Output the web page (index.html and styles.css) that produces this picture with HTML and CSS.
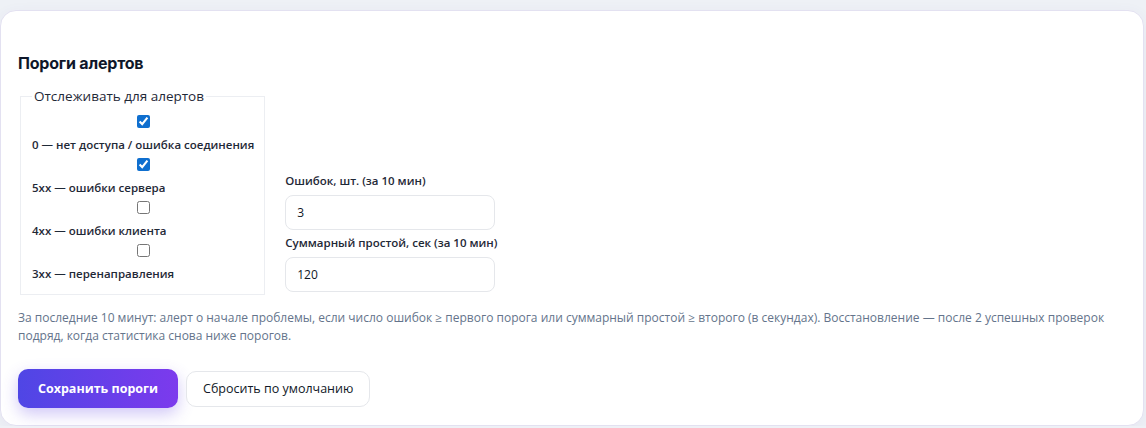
FILE: index.html
```html
<!DOCTYPE html>
<html>
<head>
  <meta charset="UTF-8">
  <title>Пороги алертов</title>
  <link rel="stylesheet" href="styles.css">
</head>
<body>

  <section class="card">
    <h2 class="card-title">Пороги алертов</h2>

    <div class="thresholds">
      <fieldset class="codes">
        <legend>Отслеживать для алертов</legend>
        <label class="code-item"><input type="checkbox" checked><span>0 — нет доступа / ошибка соединения</span></label>
        <label class="code-item"><input type="checkbox" checked><span>5xx — ошибки сервера</span></label>
        <label class="code-item"><input type="checkbox"><span>4xx — ошибки клиента</span></label>
        <label class="code-item"><input type="checkbox"><span>3xx — перенаправления</span></label>
      </fieldset>

      <div class="limits">
        <label class="field">
          <span class="field-label">Ошибок, шт. (за 10 мин)</span>
          <input class="field-input" type="text" value="3">
        </label>
        <label class="field">
          <span class="field-label">Суммарный простой, сек (за 10 мин)</span>
          <input class="field-input" type="text" value="120">
        </label>
      </div>
    </div>

    <p class="hint">За последние 10 минут: алерт о начале проблемы, если число ошибок ≥ первого порога или суммарный простой ≥ второго (в секундах). Восстановление — после 2 успешных проверок подряд, когда статистика снова ниже порогов.</p>

    <div class="actions">
      <button class="btn btn-primary">Сохранить пороги</button>
      <button class="btn btn-secondary">Сбросить по умолчанию</button>
    </div>
  </section>

</body>
</html>
```

FILE: styles.css
```css
body { margin: 0; padding-top: 10px; background: #eef1f6; font-family: "Open Sans", "Noto Sans", sans-serif; color: #111827; }

.card { margin-right: 2px; background: #fff; border: 1px solid #e3e1f1; border-radius: 16px; padding: 42px 17px 17px; box-shadow: 0 4px 16px rgba(80, 70, 160, 0.06); }
.card-title { margin: 0 0 14px; font-family: Inter, sans-serif; font-size: 16px; font-weight: 700; color: #0f172a; letter-spacing: -0.2px; }

.thresholds { display: flex; align-items: flex-end; gap: 20px; }

.codes { margin: 0 0 0 2px; padding: 10px 10px 11px 11px; border: 1px solid #eceef2; display: flex; flex-direction: column; gap: 4px; }
.codes legend { padding: 0 2px; font-size: 13.5px; color: #1f2937; }

.code-item { display: flex; flex-direction: column; gap: 8px; font-size: 11.5px; line-height: 18px; font-weight: 600; color: #1f2937; }
.code-item input { align-self: center; margin: 0; width: 13px; height: 13px; accent-color: #0f6fcf; }

.limits { display: flex; flex-direction: column; gap: 5px; padding-bottom: 3px; }
.field { display: flex; flex-direction: column; gap: 7px; }
.field-label { font-size: 11.5px; font-weight: 600; color: #1f2937; }
.field-input { width: 210px; height: 35px; box-sizing: border-box; padding: 0 11px; border: 1px solid #e5e7eb; border-radius: 8px; font: inherit; font-size: 12px; color: #111827; }

.hint { margin: 14px 0 0; font-size: 12px; line-height: 18px; color: #64748b; }

.actions { display: flex; align-items: center; gap: 8px; margin-top: 24px; }
.btn { height: 36px; padding: 0 16px; border-radius: 10px; font-family: inherit; font-size: 12.5px; cursor: pointer; }
.btn-primary { height: 39px; padding: 0 20px; background: linear-gradient(90deg, #4f46e5, #7c3aed); border: none; color: #fff; font-weight: 700; box-shadow: 0 6px 16px rgba(99, 70, 229, 0.3); }
.btn-secondary { background: #fff; border: 1px solid #e5e7eb; color: #111827; font-weight: 500; }
```
